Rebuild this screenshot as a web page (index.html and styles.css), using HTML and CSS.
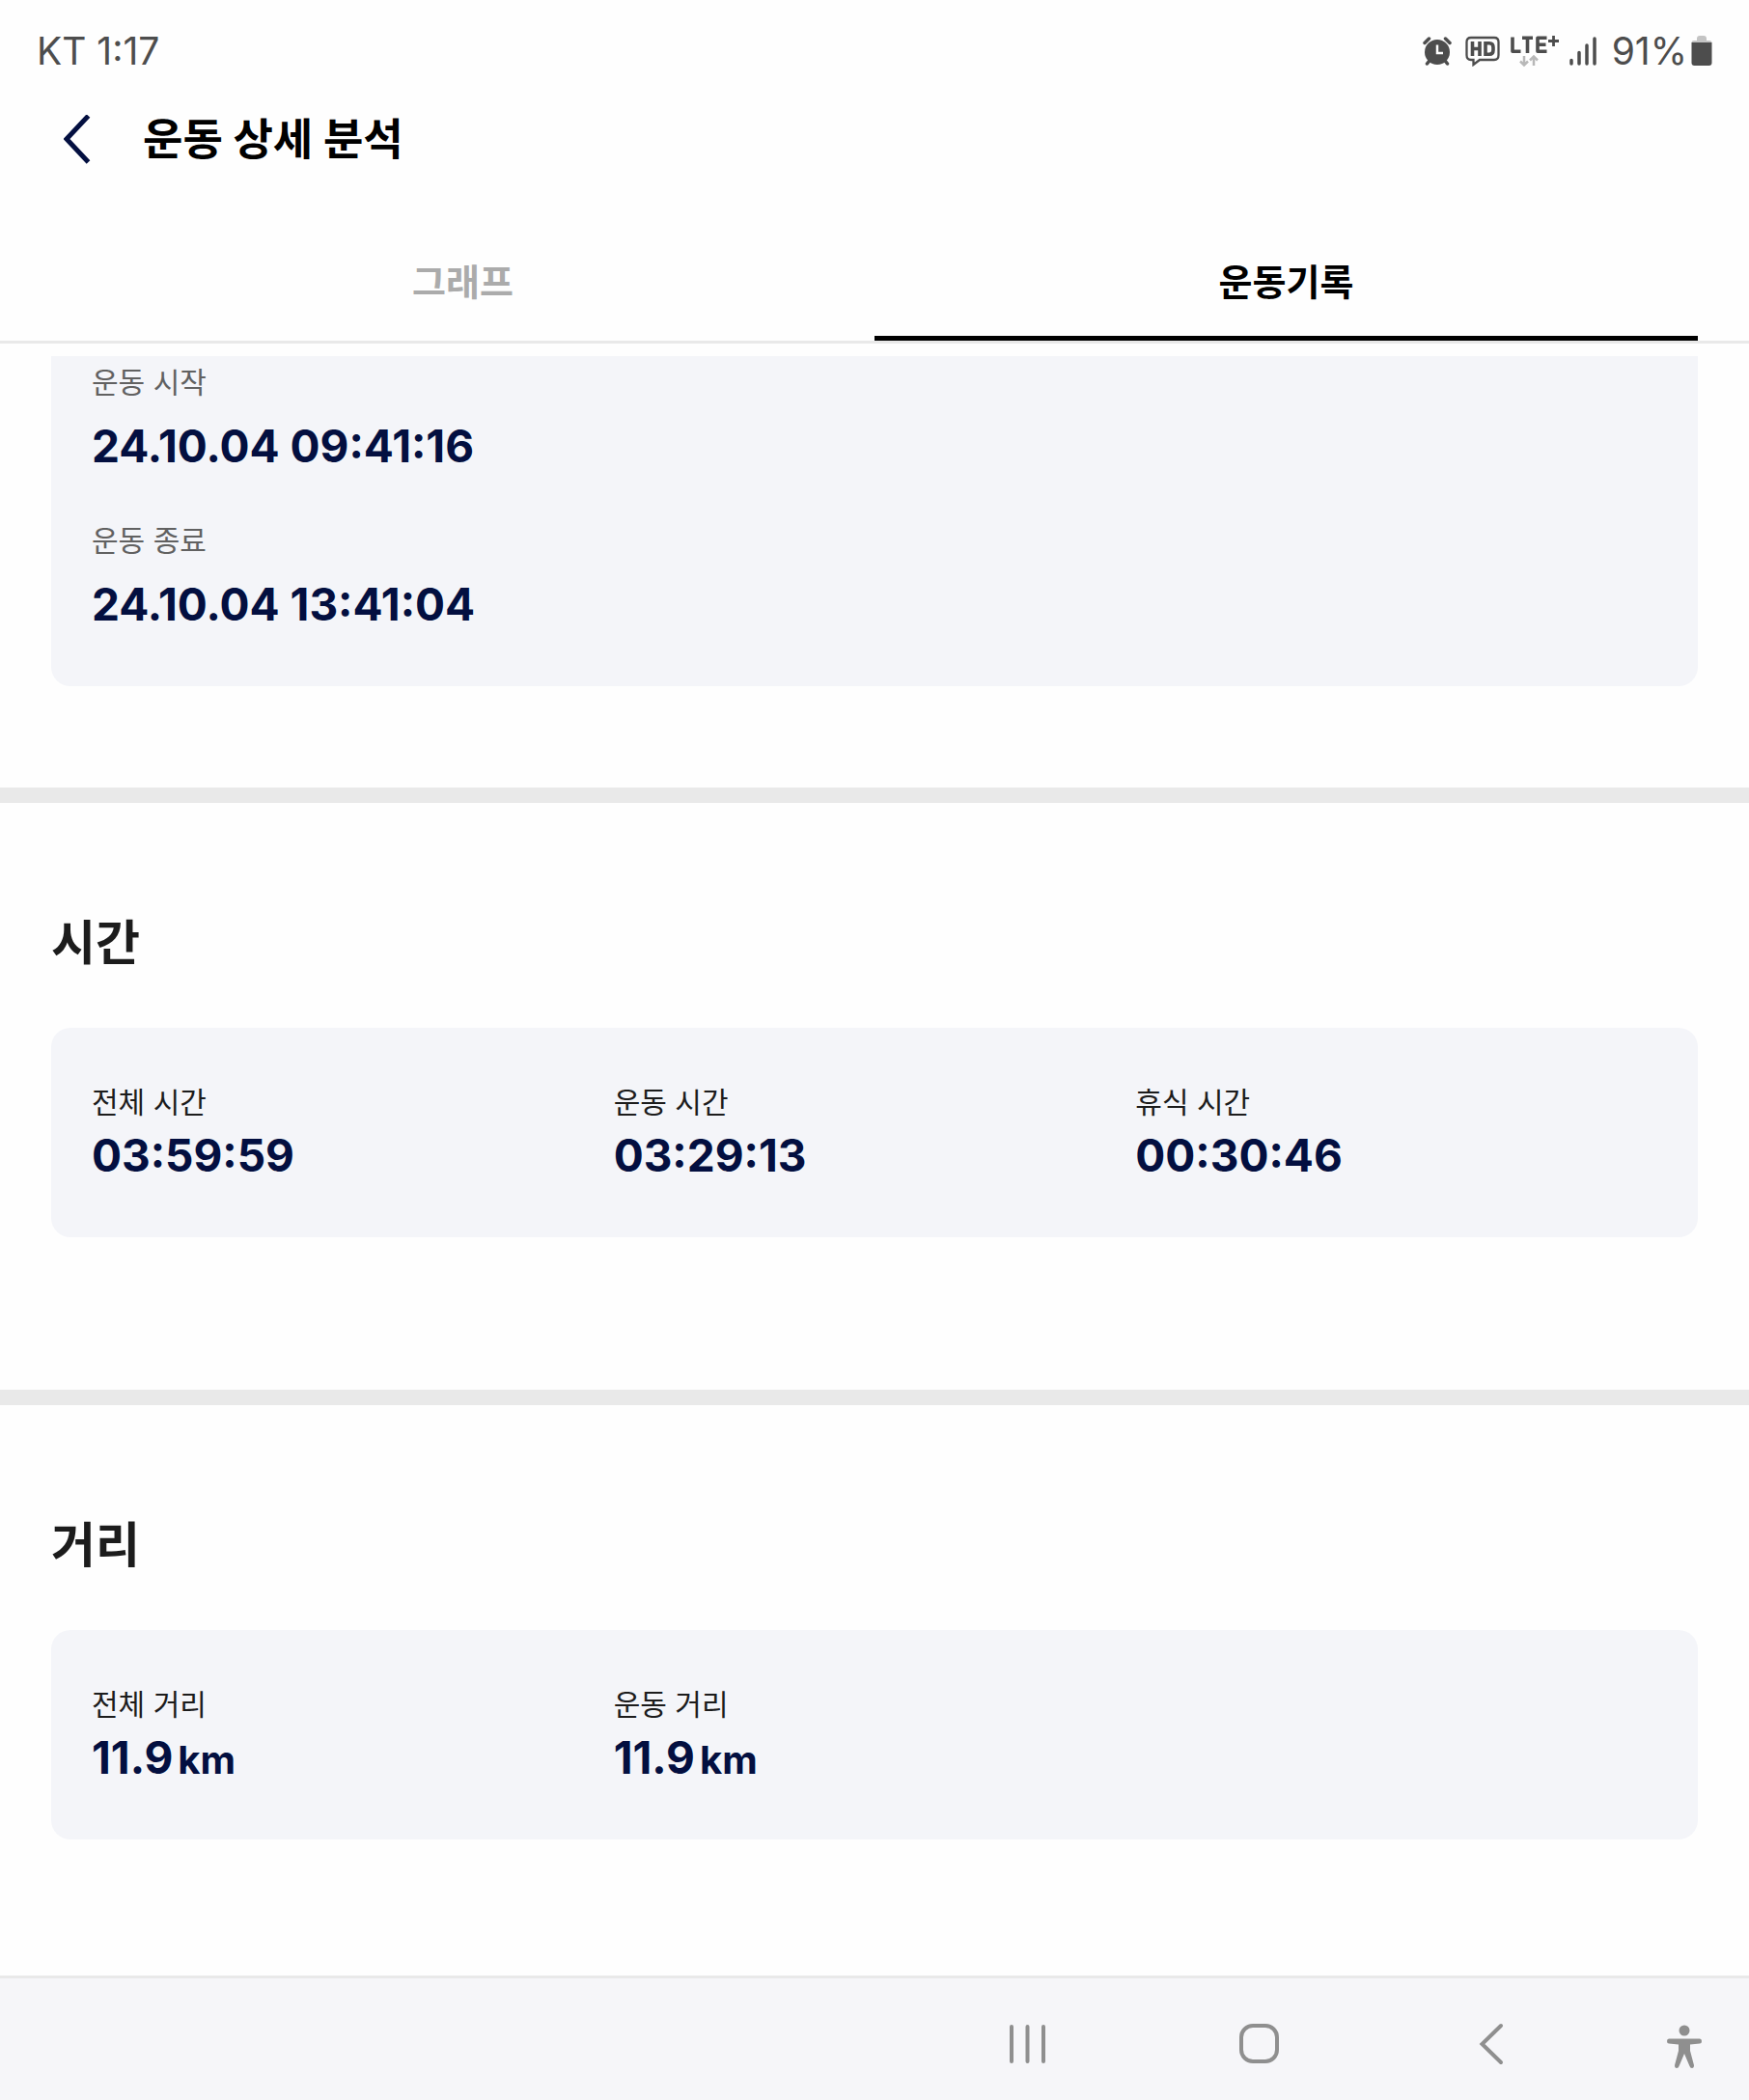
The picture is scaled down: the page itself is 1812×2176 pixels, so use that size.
FILE: index.html
```html
<!DOCTYPE html>
<html lang="ko">
<head>
    <meta charset="UTF-8">
    <meta name="viewport" content="width=device-width, initial-scale=1.0">
    <title>운동 상세 분석</title>
    <link rel="stylesheet" href="styles.css">
</head>
<body>
    <div class="status-bar">
        <span>KT 1:17</span>
        <div class="status-icons">
            <svg class="icon-alarm" width="30" height="30" viewBox="0 0 30 30">
                <path d="M2 6.5 L6.5 2 M28 6.5 L23.5 2 M4.5 28 L8 23.5 M25.5 28 L22 23.5" stroke="#4d4d4d" stroke-width="3.5" stroke-linecap="round"/>
                <circle cx="15" cy="16" r="13" fill="#4d4d4d"/>
                <path d="M15 8.5 V17 H21" fill="none" stroke="#fefefe" stroke-width="2.5"/>
            </svg>
            <svg class="icon-hd" width="36" height="32" viewBox="0 0 36 32">
                <path d="M6 2 H30 Q34.5 2 34.5 6.5 V20 Q34.5 25 30 25 H15 L8.5 30 V25 H6 Q1.5 25 1.5 20 V6.5 Q1.5 2 6 2 Z" fill="none" stroke="#4d4d4d" stroke-width="2.3"/>
                <path d="M7.5 6 V21 M15 6 V21 M7.5 13.5 H15 M21 7.8 V19.2 H25 Q29 19.2 29 15 V12 Q29 7.8 25 7.8 Z" fill="none" stroke="#4d4d4d" stroke-width="3.6"/>
            </svg>
            <svg class="icon-lte" width="50" height="34" viewBox="0 0 50 34">
                <path d="M2 2.5 V17.2 H10.5 M12 3.2 H23 M17.5 3.2 V19 M37.5 3.2 H28 V17.2 H37.5 M28 10.2 H36.5" fill="none" stroke="#4d4d4d" stroke-width="3.6" stroke-linejoin="round"/>
                <path d="M39 6.5 H50 M44.5 1 V12" stroke="#4d4d4d" stroke-width="2.8"/>
                <path d="M14 22 V31 M10 27.5 L14 31.5 L18 27.5 M24 32 V23 M20 26.5 L24 22.5 L28 26.5" fill="none" stroke="#b8b8b8" stroke-width="2.5"/>
            </svg>
            <svg class="icon-signal" width="28" height="30" viewBox="0 0 28 30">
                <path d="M2 24.5 V28 M10 16.5 V28 M18 9 V28 M26 2 V28" stroke="#4d4d4d" stroke-width="3.5" stroke-linecap="round"/>
            </svg>
            <span>91%</span>
            <svg class="icon-battery" width="22" height="31" viewBox="0 0 22 31">
                <path d="M6 3 Q6 0 9 0 H13 Q16 0 16 3 V5 H19 Q21.5 5 21.5 7 H0.5 Q0.5 5 3 5 H6 Z" fill="#c4c4c4"/>
                <path d="M0.5 7 H21.5 V28 Q21.5 31 18.5 31 H3.5 Q0.5 31 0.5 28 Z" fill="#4d4d4d"/>
            </svg>
        </div>
    </div>

    <header class="header">
        <button class="back-btn" type="button" aria-label="뒤로">
            <svg width="28" height="52" viewBox="0 0 28 52">
                <path d="M25.5 1 L3 25 L25.5 49" fill="none" stroke="#030f40" stroke-width="5"/>
            </svg>
        </button>
        <h1>운동 상세 분석</h1>
    </header>

    <nav class="tabs">
        <button class="tab" type="button">그래프</button>
        <button class="tab active" type="button">운동기록</button>
    </nav>

    <main class="content">
        <section class="section summary">
            <dl class="card">
                <div class="item">
                    <dt>운동 시작</dt>
                    <dd>24.10.04 09:41:16</dd>
                </div>
                <div class="item">
                    <dt>운동 종료</dt>
                    <dd>24.10.04 13:41:04</dd>
                </div>
            </dl>
        </section>

        <section class="section">
            <h2>시간</h2>
            <dl class="card columns">
                <div class="item">
                    <dt>전체 시간</dt>
                    <dd>03:59:59</dd>
                </div>
                <div class="item">
                    <dt>운동 시간</dt>
                    <dd>03:29:13</dd>
                </div>
                <div class="item">
                    <dt>휴식 시간</dt>
                    <dd>00:30:46</dd>
                </div>
            </dl>
        </section>

        <section class="section">
            <h2>거리</h2>
            <dl class="card columns">
                <div class="item">
                    <dt>전체 거리</dt>
                    <dd>11.9<span class="unit">km</span></dd>
                </div>
                <div class="item">
                    <dt>운동 거리</dt>
                    <dd>11.9<span class="unit">km</span></dd>
                </div>
            </dl>
        </section>
    </main>

    <nav class="system-nav">
        <button type="button" aria-label="최근 앱">
            <svg width="44" height="44" viewBox="0 0 44 44">
                <path d="M5 4 V40 M21.5 4 V40 M38 4 V40" stroke="#8f8f8f" stroke-width="4" stroke-linecap="round"/>
            </svg>
        </button>
        <button type="button" aria-label="홈">
            <svg width="44" height="44" viewBox="0 0 44 44">
                <rect x="3" y="3" width="37" height="37" rx="12" fill="none" stroke="#8f8f8f" stroke-width="4"/>
            </svg>
        </button>
        <button type="button" aria-label="뒤로 가기">
            <svg width="44" height="44" viewBox="0 0 44 44">
                <path d="M32 3 L12.5 22 L32 41" fill="none" stroke="#8f8f8f" stroke-width="4" stroke-linecap="round"/>
            </svg>
        </button>
        <button class="accessibility" type="button" aria-label="접근성">
            <svg width="38" height="46" viewBox="0 0 38 46">
                <circle cx="19" cy="6" r="5.5" fill="#8f8f8f"/>
                <path d="M3 14.5 H35 Q37 14.5 37 17 Q37 19.5 35 19.5 L25 20.5 V27 L29 42 Q29 45 27 45 Q25 45 24.5 43 L19 30 L13.5 43 Q13 45 11 45 Q9 45 9 42 L13 27 V20.5 L3 19.5 Q1 19.5 1 17 Q1 14.5 3 14.5 Z" fill="#8f8f8f"/>
            </svg>
        </button>
    </nav>
</body>
</html>
```

FILE: styles.css
```css
* {
    box-sizing: border-box;
}
body {
    font-family: 'Inter', 'Noto Sans CJK KR', sans-serif;
    margin: 0;
    min-height: 100vh;
    background: #fefefe;
    color: #1c1c1c;
    display: flex;
    flex-direction: column;
}
h1, h2, dl, dd {
    margin: 0;
}
button {
    font: inherit;
    color: inherit;
    background: none;
    border: none;
    padding: 0;
    cursor: pointer;
}
svg {
    display: block;
    flex-shrink: 0;
}

/* Status bar */
.status-bar {
    display: flex;
    justify-content: space-between;
    align-items: center;
    height: 104px;
    padding: 1px 38px 0;
    font-size: 39px;
    color: #4d4d4d;
}
.status-icons {
    display: flex;
    align-items: center;
}
.icon-hd {
    margin-left: 14px;
}
.icon-lte {
    margin-left: 11px;
}
.icon-signal {
    margin: 0 16px 0 11px;
}
.icon-battery {
    margin-left: 4px;
}

/* Header */
.header {
    display: flex;
    align-items: center;
    gap: 54px;
    padding: 9px 66px 53px;
}
.header h1 {
    font-size: 45px;
    font-weight: 700;
    line-height: 64px;
    color: #000;
}

/* Tabs */
.tabs {
    display: flex;
    padding: 0 53px;
    border-bottom: 3px solid #e9e9e9;
}
.tab {
    flex: 1;
    height: 123px;
    font-size: 38px;
    font-weight: 700;
    color: #ababab;
    border-bottom: 5px solid transparent;
}
.tab.active {
    color: #000;
    border-bottom-color: #000;
}

/* Records */
.content {
    flex: 1;
    padding-top: 13px;
}
.section {
    padding: 109px 53px 158px;
}
.section + .section {
    border-top: 16px solid #e9e9e9;
}
.section h2 {
    font-size: 50px;
    font-weight: 700;
    line-height: 72px;
    margin-bottom: 52px;
}
.section:last-child {
    padding-bottom: 104px;
}
.card {
    background: #f4f5f9;
    border-radius: 20px;
    padding: 55px 42px 57px;
}
.columns {
    display: grid;
    grid-template-columns: repeat(3, 1fr);
}
.item dt {
    font-size: 30px;
    line-height: 44px;
}
.item dd {
    margin-top: 5px;
    font-size: 46px;
    font-weight: 700;
    line-height: 56px;
    color: #030f40;
}
.unit {
    margin-left: 5px;
    font-size: 40px;
    line-height: 1;
}
.summary {
    padding-top: 0;
    padding-bottom: 105px;
}
.summary .card {
    border-radius: 0 0 20px 20px;
    padding-top: 5px;
}
.summary .item + .item {
    margin-top: 48px;
}
.summary dt {
    color: #616161;
}
.summary dd {
    margin-top: 16px;
}

/* System navigation */
.system-nav {
    display: flex;
    justify-content: flex-end;
    align-items: center;
    gap: 196px;
    height: 129px;
    padding: 9px 48px 0 0;
    background: #f6f6f9;
    border-top: 3px solid #e9e9e9;
}
.accessibility {
    margin-left: -37px;
    padding-top: 6px;
}
```
